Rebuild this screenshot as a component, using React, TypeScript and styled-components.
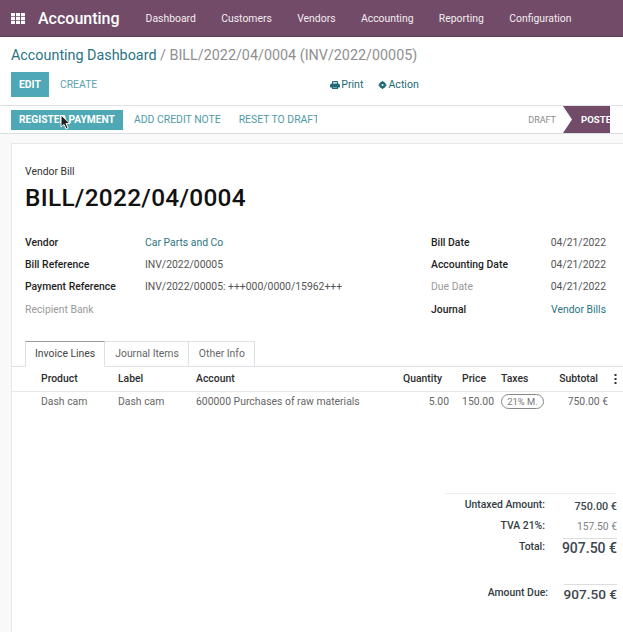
import styled, { createGlobalStyle } from "styled-components";

const GlobalStyle = createGlobalStyle`
  html, body {
    margin: 0;
    padding: 0;
    width: 623px;
    height: 632px;
    overflow: hidden;
    background: #fff;
    font-family: Roboto, "Noto Sans", sans-serif;
    font-size: 10.4px;
    color: #4c4c4c;
  }
`;

const Page = styled.div`
  position: relative;
  width: 623px;
  height: 632px;
  overflow: hidden;
`;

const Navbar = styled.header`
  display: flex;
  align-items: center;
  height: 37px;
  background: #714b67;
  border-bottom: 1px solid #5d3f55;
  box-sizing: border-box;
  padding-left: 11px;
  color: #fff;
  svg {
    flex-shrink: 0;
  }
`;

const Brand = styled.span`
  font-size: 16px;
  font-weight: 500;
  margin-left: 13px;
  margin-right: 26px;
`;

const NavItem = styled.span`
  font-size: 10.4px;
  margin-right: 25.4px;
  color: #f3edf1;
`;

const ControlPanel = styled.div`
  padding: 10px 11px 0;
  height: 68px;
  box-sizing: border-box;
`;

const Breadcrumb = styled.div`
  font-size: 14.35px;
  line-height: 18px;
  color: #8f8f8f;
  a {
    color: #2b7482;
  }
`;

const ButtonRow = styled.div`
  display: flex;
  align-items: center;
  margin-top: 7px;
  height: 25px;
`;

const PrimaryButton = styled.span`
  display: inline-flex;
  align-items: center;
  height: 25px;
  padding: 0 8px;
  box-sizing: border-box;
  background: #4fa8b5;
  color: #fff;
  font-size: 10.4px;
  font-weight: 700;
`;

const LinkButton = styled.span`
  color: #5aa3ae;
  font-size: 10.4px;
  margin-left: 11px;
`;

const ActionLink = styled.span<{ $left: number }>`
  display: inline-flex;
  align-items: center;
  gap: 1px;
  font-size: 10.6px;
  color: #1f6a76;
  margin-left: ${(p) => p.$left}px;
`;

const StatusBar = styled.div`
  display: flex;
  align-items: center;
  height: 29px;
  padding: 0 13px 0 11px;
  box-sizing: border-box;
  border-top: 1px solid #e2e2e2;
  border-bottom: 1px solid #d9e0e2;
`;

const RegisterButton = styled(PrimaryButton)`
  height: 20px;
  padding: 0 8px;
  font-size: 10.2px;
  width: 112px;
  white-space: nowrap;
`;

const BarLink = styled.span<{ $left: number; $width?: number }>`
  color: #4f9aa6;
  font-size: 10.4px;
  white-space: nowrap;
  overflow: hidden;
  margin-left: ${(p) => p.$left}px;
  width: ${(p) => (p.$width ? `${p.$width}px` : "auto")};
`;

const Steps = styled.div`
  display: flex;
  align-items: center;
  margin-left: auto;
  height: 100%;
  overflow: hidden;
`;

const DraftStep = styled.span`
  font-size: 9px;
  color: #8a8a8a;
  margin-right: 7px;
`;

const PostedStep = styled.span`
  display: flex;
  align-items: center;
  width: 47px;
  height: 100%;
  padding-left: 18px;
  box-sizing: border-box;
  font-size: 9.6px;
  font-weight: 700;
  color: #fff;
  white-space: nowrap;
  overflow: hidden;
  background: #714b67;
  clip-path: polygon(0 0, 100% 0, 100% 100%, 0 100%, 9px 50%);
`;

const Content = styled.main`
  height: 498px;
  background: #f9f9f9;
  padding: 9px 0 0 11px;
  box-sizing: border-box;
`;

const Sheet = styled.section`
  height: 100%;
  background: #fff;
  border: 1px solid #e5e7e8;
  border-right: none;
  border-bottom: none;
  padding-top: 21px;
  box-sizing: border-box;
`;

const Heading = styled.div`
  padding-left: 13px;
`;

const DocKind = styled.div`
  font-size: 10.4px;
  line-height: 13px;
  color: #333;
`;

const DocTitle = styled.h1`
  margin: 4px 0 0;
  font-size: 24.4px;
  line-height: 32px;
  font-weight: 500;
  color: #111;
  letter-spacing: 0.3px;
`;

const FormGrid = styled.div`
  display: flex;
  margin-top: 17px;
  padding-left: 13px;
`;

const FormColumn = styled.div<{ $cols: string }>`
  display: grid;
  grid-template-columns: ${(p) => p.$cols};
  grid-auto-rows: 22.4px;
  align-items: center;
  font-size: 10.4px;
`;

const LeftColumn = styled(FormColumn)`
  width: 406px;
`;

const RightColumn = styled(FormColumn)`
  width: 175px;
`;

const Label = styled.span<{ $muted?: boolean }>`
  font-weight: ${(p) => (p.$muted ? 400 : 500)};
  color: ${(p) => (p.$muted ? "#9a9a9a" : "#1f1f1f")};
`;

const Value = styled.span<{ $link?: boolean; $end?: boolean }>`
  color: ${(p) => (p.$link ? "#2b7482" : "#555")};
  text-align: ${(p) => (p.$end ? "right" : "left")};
`;

const Tabs = styled.nav`
  display: flex;
  margin-top: 20px;
  padding-left: 13px;
  height: 26px;
  box-sizing: border-box;
  border-bottom: 1px solid #dee2e6;
`;

const Tab = styled.span<{ $active?: boolean }>`
  display: flex;
  align-items: center;
  height: 26px;
  box-sizing: border-box;
  padding: ${(p) => (p.$active ? "0 9px" : "0 9px 0 10px")};
  font-size: 10.4px;
  color: ${(p) => (p.$active ? "#444" : "#666")};
  background: #fff;
  border: 1px solid #dee2e6;
  border-left: ${(p) => (p.$active ? "1px solid #dee2e6" : "none")};
  border-top: 1px solid ${(p) => (p.$active ? "#999" : "#dee2e6")};
  border-bottom: ${(p) => (p.$active ? "1px solid #fff" : "1px solid #dee2e6")};
`;

const LineRow = styled.div<{ $head?: boolean }>`
  display: grid;
  grid-template-columns: 77px 78px 180px 73px 45px 7px 58px 49px 15px;
  align-items: center;
  height: ${(p) => (p.$head ? 24 : 20)}px;
  padding-left: 29px;
  font-size: 10.4px;
  font-weight: ${(p) => (p.$head ? 500 : 400)};
  color: ${(p) => (p.$head ? "#2d2d2d" : "#666")};
  border-bottom: ${(p) => (p.$head ? "1px solid #e6e8ea" : "none")};
  white-space: nowrap;
`;

const EndCell = styled.span<{ $pad?: number }>`
  text-align: right;
  padding-right: ${(p) => p.$pad ?? 0}px;
`;

const KebabCell = styled.span`
  display: flex;
  justify-content: flex-end;
  padding-right: 6px;
`;

const TaxBadge = styled.span`
  display: inline-block;
  box-sizing: border-box;
  width: 43px;
  height: 15px;
  line-height: 13px;
  text-align: center;
  border: 1px solid #888;
  border-radius: 8px;
  font-size: 9.4px;
  color: #777;
`;

const Totals = styled.div<{ $cols: string; $gap: number; $ruled?: boolean }>`
  display: grid;
  grid-template-columns: ${(p) => p.$cols};
  align-items: center;
  width: 172px;
  margin: ${(p) => p.$gap}px 0 0 433px;
  border-top: ${(p) => (p.$ruled ? "1px solid #eeeeee" : "none")};
  font-size: 10.4px;
`;

const TotalLabel = styled.span`
  font-weight: 500;
  color: #333c44;
  text-align: right;
  padding-bottom: 3px;
  white-space: nowrap;
`;

const SubtotalLabel = styled(TotalLabel)`
  padding-bottom: 0;
`;

const TotalValue = styled.span<{ $size: number; $strong?: boolean }>`
  display: flex;
  align-items: center;
  justify-content: flex-end;
  box-sizing: border-box;
  height: 22px;
  white-space: nowrap;
  font-size: ${(p) => p.$size}px;
  font-weight: ${(p) => (p.$strong ? 500 : 400)};
  color: ${(p) => (p.$strong ? "#3d4650" : "#7b8288")};
`;

const SubtotalValue = styled(TotalValue)`
  padding-top: 4px;
`;

const GrandValue = styled(TotalValue)<{ $indent: number }>`
  height: 20px;
  margin-left: ${(p) => p.$indent}px;
  border-top: 1px solid #ddd;
`;

const Cursor = styled.svg`
  position: absolute;
  left: 60px;
  top: 114px;
`;

const AppsIcon = () => (
  <svg width="14" height="11" viewBox="0 0 14 11" fill="#fff">
    {[0, 5, 10].map((x) =>
      [0, 3.9, 7.8].map((y) => <rect key={`${x}-${y}`} x={x} y={y} width="4" height="3.2" />)
    )}
  </svg>
);

const PrintIcon = () => (
  <svg width="10" height="8" viewBox="0 0 10 8" fill="none" stroke="#1f6a76" strokeWidth="1.1">
    <path d="M2.5 3V1.2Q2.5 .6 3.1 .6h3.8q.6 0 .6 .6V3" />
    <path d="M.6 4.2Q.6 3 1.8 3h6.4q1.2 0 1.2 1.2V6H.6z" fill="#1f6a76" />
    <path d="M2.5 6v1.4h5V6" />
  </svg>
);

const GearIcon = () => (
  <svg width="9" height="8" viewBox="0 0 9 9">
    <circle cx="4.5" cy="4.5" r="2.4" fill="none" stroke="#1f6a76" strokeWidth="2.6" />
    <path d="M3.7 0h1.6v1.5H3.7zM3.7 7.5h1.6V9H3.7zM0 3.7h1.5v1.6H0zM7.5 3.7H9v1.6H7.5z" fill="#1f6a76" />
  </svg>
);

const KebabIcon = () => (
  <svg width="3" height="10" viewBox="0 0 3 10" fill="#333">
    <rect x="0.5" y="0" width="2" height="2" />
    <rect x="0.5" y="4" width="2" height="2" />
    <rect x="0.5" y="8" width="2" height="2" />
  </svg>
);

const navItems = ["Dashboard", "Customers", "Vendors", "Accounting", "Reporting", "Configuration"];

export default function App() {
  return (
    <Page>
      <GlobalStyle />
      <Navbar>
        <AppsIcon />
        <Brand>Accounting</Brand>
        {navItems.map((item) => (
          <NavItem key={item}>{item}</NavItem>
        ))}
      </Navbar>
      <ControlPanel>
        <Breadcrumb>
          <a>Accounting Dashboard</a> / BILL/2022/04/0004 (INV/2022/00005)
        </Breadcrumb>
        <ButtonRow>
          <PrimaryButton>EDIT</PrimaryButton>
          <LinkButton>CREATE</LinkButton>
          <ActionLink $left={233}>
            <PrintIcon />
            Print
          </ActionLink>
          <ActionLink $left={15}>
            <GearIcon />
            Action
          </ActionLink>
        </ButtonRow>
      </ControlPanel>
      <StatusBar>
        <RegisterButton>REGISTER PAYMENT</RegisterButton>
        <BarLink $left={11}>ADD CREDIT NOTE</BarLink>
        <BarLink $left={18} $width={78}>RESET TO DRAFT</BarLink>
        <Steps>
          <DraftStep>DRAFT</DraftStep>
          <PostedStep>POSTED</PostedStep>
        </Steps>
      </StatusBar>
      <Content>
        <Sheet>
          <Heading>
            <DocKind>Vendor Bill</DocKind>
            <DocTitle>BILL/2022/04/0004</DocTitle>
          </Heading>
          <FormGrid>
            <LeftColumn $cols="120px 1fr">
              <Label>Vendor</Label>
              <Value $link>Car Parts and Co</Value>
              <Label>Bill Reference</Label>
              <Value>INV/2022/00005</Value>
              <Label>Payment Reference</Label>
              <Value>INV/2022/00005: +++000/0000/15962+++</Value>
              <Label $muted>Recipient Bank</Label>
              <Value />
            </LeftColumn>
            <RightColumn $cols="110px 65px">
              <Label>Bill Date</Label>
              <Value $end>04/21/2022</Value>
              <Label>Accounting Date</Label>
              <Value $end>04/21/2022</Value>
              <Label $muted>Due Date</Label>
              <Value $end>04/21/2022</Value>
              <Label>Journal</Label>
              <Value $end $link>Vendor Bills</Value>
            </RightColumn>
          </FormGrid>
          <Tabs>
            <Tab $active>Invoice Lines</Tab>
            <Tab>Journal Items</Tab>
            <Tab>Other Info</Tab>
          </Tabs>
          <LineRow $head>
            <span>Product</span>
            <span>Label</span>
            <span>Account</span>
            <EndCell $pad={7}>Quantity</EndCell>
            <EndCell $pad={8}>Price</EndCell>
            <span />
            <span>Taxes</span>
            <EndCell $pad={10}>Subtotal</EndCell>
            <KebabCell><KebabIcon /></KebabCell>
          </LineRow>
          <LineRow>
            <span>Dash cam</span>
            <span>Dash cam</span>
            <span>600000 Purchases of raw materials</span>
            <EndCell>5.00</EndCell>
            <EndCell>150.00</EndCell>
            <span />
            <span><TaxBadge>21% M.</TaxBadge></span>
            <EndCell>750.00 €</EndCell>
            <span />
          </LineRow>
          <Totals $cols="100px 72px" $gap={81} $ruled>
            <SubtotalLabel>Untaxed Amount:</SubtotalLabel>
            <SubtotalValue $size={10.8} $strong>750.00 €</SubtotalValue>
            <TotalLabel>TVA 21%:</TotalLabel>
            <TotalValue $size={10.3}>157.50 €</TotalValue>
            <TotalLabel>Total:</TotalLabel>
            <GrandValue $size={14} $strong $indent={18}>907.50 €</GrandValue>
          </Totals>
          <Totals $cols="103px 69px" $gap={26}>
            <TotalLabel>Amount Due:</TotalLabel>
            <GrandValue $size={13.6} $strong $indent={16}>907.50 €</GrandValue>
          </Totals>
        </Sheet>
      </Content>
      <Cursor width="12" height="16" viewBox="0 0 12 16">
        <path d="M1 1v12l3-2.6L6.2 15l2-1L6 9.6h4z" fill="#222" stroke="#fff" strokeWidth="1" />
      </Cursor>
    </Page>
  );
}
